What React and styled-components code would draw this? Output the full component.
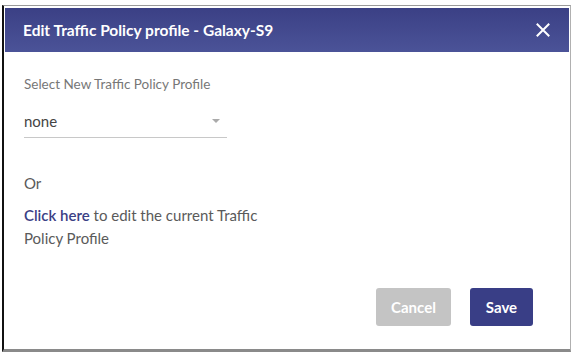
import React from "react";
import styled, { createGlobalStyle } from "styled-components";

const GlobalStyle = createGlobalStyle`
  html, body {
    margin: 0;
    padding: 0;
    background: #fff;
    font-family: Lato, "Open Sans", "Liberation Sans", sans-serif;
  }
`;

export default function App() {
  return (
    <>
      <GlobalStyle />
      <Frame>
        <Dialog>
          <Header>
            <Title>Edit Traffic Policy profile - Galaxy-S9</Title>
            <CloseButton aria-label="close">
              <svg width="14" height="14" viewBox="0 0 14 14">
                <path d="M1.5 1.5 L12.5 12.5 M12.5 1.5 L1.5 12.5" stroke="#fff" strokeWidth="2" strokeLinecap="square" />
              </svg>
            </CloseButton>
          </Header>
          <Body>
            <Label>Select New Traffic Policy Profile</Label>
            <SelectBox>
              <SelectValue>none</SelectValue>
              <Caret />
            </SelectBox>
            <Or>Or</Or>
            <EditText>
              <Link>Click here</Link> to edit the current Traffic Policy Profile
            </EditText>
          </Body>
          <Footer>
            <Button variant="cancel">Cancel</Button>
            <Button variant="save">Save</Button>
          </Footer>
        </Dialog>
      </Frame>
    </>
  );
}

const Frame = styled.div`
  padding: 5px 0 0 2px;
  height: 352px;
  box-sizing: border-box;
`;

const Dialog = styled.div`
  width: 569px;
  height: 347px;
  box-sizing: border-box;
  border-top: 1px solid #9a9a9a;
  border-left: 2px solid #111;
  border-right: 1px solid #b0b0b0;
  border-bottom: 3px solid #8a8a8a;
  padding: 2px 1px 0 1px;
  display: flex;
  flex-direction: column;
`;

const Header = styled.div`
  height: 44px;
  flex-shrink: 0;
  background: linear-gradient(180deg, #3b4085 0%, #4b5398 100%);
  display: flex;
  align-items: center;
  justify-content: space-between;
  padding: 0 19px 0 18px;
`;

const Title = styled.div`
  color: #fff;
  font-size: 15.5px;
  font-weight: 700;
`;

const CloseButton = styled.div`
  display: flex;
  align-items: center;
  width: 14px;
  height: 14px;
`;

const Body = styled.div`
  padding: 24px 19px 0 19px;
  flex: 1;
`;

const Label = styled.div`
  font-size: 13.5px;
  color: #777;
  line-height: 16px;
`;

const SelectBox = styled.div`
  width: 203px;
  margin-top: 17px;
  height: 29px;
  box-sizing: border-box;
  border-bottom: 1px solid #c8c8c8;
  display: flex;
  align-items: center;
  justify-content: space-between;
  padding: 0 7px 5px 0;
`;

const SelectValue = styled.span`
  font-size: 15px;
  color: #444;
`;

const Caret = styled.span`
  width: 0;
  height: 0;
  border-left: 4px solid transparent;
  border-right: 4px solid transparent;
  border-top: 4px solid #aaa;
`;

const Or = styled.div`
  margin-top: 35px;
  font-size: 15px;
  color: #5a5a5a;
  line-height: 20px;
`;

const EditText = styled.div`
  margin-top: 11px;
  width: 255px;
  font-size: 15px;
  color: #5a5a5a;
  line-height: 23px;
`;

const Link = styled.span`
  color: #3b4085;
  font-weight: 600;
  cursor: pointer;
`;

const Footer = styled.div`
  display: flex;
  justify-content: flex-end;
  gap: 19px;
  padding: 0 36px 23px 0;
`;

const Button = styled.button`
  height: 38px;
  border: none;
  border-radius: 3px;
  font-family: Lato, "Open Sans", "Liberation Sans", sans-serif;
  font-size: 15px;
  font-weight: 700;
  color: #fff;
  padding: 0;
  width: ${(p) => (p.variant === "save" ? "63px" : "75px")};
  background: ${(p) => (p.variant === "save" ? "#393e86" : "#c4c4c4")};
`;
